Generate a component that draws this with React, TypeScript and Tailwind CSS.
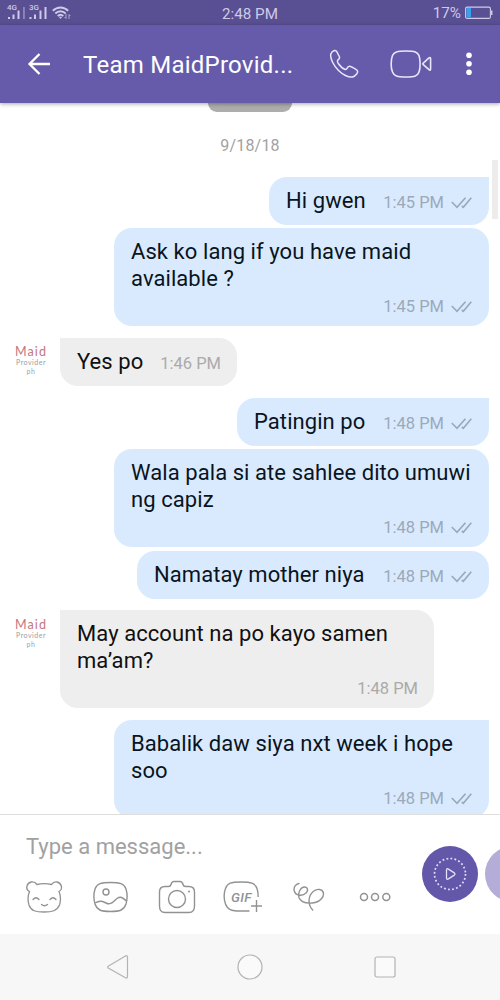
interface Message {
  text: string[];
  time: string;
  mine?: boolean;
  first?: boolean;
  box: string;
}

const messages: Message[] = [
  { text: ["Hi gwen"], time: "1:45 PM", mine: true, first: true, box: "mt-5 w-[220px] h-12" },
  { text: ["Ask ko lang if you have maid", "available ?"], time: "1:45 PM", mine: true, box: "mt-[3px] w-[375px] h-[98px]" },
  { text: ["Yes po"], time: "1:46 PM", first: true, box: "mt-3 w-[177px] h-12" },
  { text: ["Patingin po"], time: "1:48 PM", mine: true, first: true, box: "mt-3 w-[252px] h-12" },
  { text: ["Wala pala si ate sahlee dito umuwi", "ng capiz"], time: "1:48 PM", mine: true, box: "mt-[3px] w-[375px] h-[98px]" },
  { text: ["Namatay mother niya"], time: "1:48 PM", mine: true, box: "mt-1 w-[352px] h-12" },
  { text: ["May account na po kayo samen", "ma’am?"], time: "1:48 PM", first: true, box: "mt-[11px] w-[374px] h-[98px]" },
  { text: ["Babalik daw siya nxt week i hope", "soo"], time: "1:48 PM", mine: true, first: true, box: "mt-3 w-[375px] h-[98px]" },
];

function StatusBar() {
  return (
    <div className="flex h-[25px] shrink-0 items-center bg-[#594f93] text-[#cfcae8]">
      <div className="flex w-[200px] items-center pt-px pl-[7px]">
        <div className="relative h-[14px] w-[21px]">
          <span className="absolute top-[-2px] left-0 text-[8px] leading-[8px] font-medium">4G</span>
          <svg width="19" height="14" viewBox="0 0 19 14" fill="#cfcae8">
            <rect x="1" y="11" width="2" height="2" />
            <rect x="5.500" y="8.500" width="2" height="4.500" />
            <rect x="10.500" y="4.500" width="2" height="8.500" />
            <rect x="16.200" y="1" width="1.500" height="12" opacity="0.550" />
          </svg>
        </div>
        <div className="relative h-[14px] w-[24px]">
          <span className="absolute top-[-2px] left-[1px] text-[8px] leading-[8px] font-medium">3G</span>
          <svg width="19" height="14" viewBox="0 0 19 14" fill="#cfcae8">
            <rect x="1.500" y="11" width="2" height="2" />
            <rect x="6" y="8.500" width="2" height="4.500" />
            <rect x="11.500" y="4.500" width="2" height="8.500" />
            <rect x="16.500" y="1" width="2" height="12" />
          </svg>
        </div>
        <svg width="19" height="14" viewBox="0 0 19 14" fill="none" stroke="#cfcae8" strokeWidth="1.900">
          <path d="M.8 4.800C5.300.4 11.700.4 16.200 4.800M3.300 7.500C6.300 4.500 10.700 4.500 13.700 7.500M5.700 10C7.500 8.300 9.500 8.300 11.300 10" />
          <path d="M6.800 10.800L8.500 13L10.200 10.800Z" fill="#cfcae8" stroke="none" />
          <path d="M14 8v4.500M12.500 11l1.500 1.500M17 13V8.500M18.300 10L17 8.500" strokeWidth="1" opacity=".7" />
        </svg>
      </div>
      <span className="w-[100px] pt-[2px] text-center text-[15.200px] leading-[18px] whitespace-nowrap">2:48 PM</span>
      <div className="flex flex-1 items-center justify-end pt-[1px] pr-[7px]">
        <span className="mr-[4px] text-[15.200px] leading-[18px]">17%</span>
        <svg width="28" height="14" viewBox="0 0 28 14" fill="none">
          <rect x=".6" y="1.100" width="24.800" height="11.300" rx="1.500" stroke="#cfcae8" strokeWidth="1.100" />
          <rect x="1.500" y="2" width="4.500" height="9.500" fill="#39a0ed" />
          <path d="M26.700 4.500v4.500" stroke="#cfcae8" strokeWidth="1.500" />
        </svg>
      </div>
    </div>
  );
}

function Header() {
  return (
    <header className="relative z-10 flex h-[78px] shrink-0 items-center bg-[#665bab] shadow-[0_1px_4px_rgba(0,0,0,0.35)]">
      <svg className="ml-[27px]" width="24" height="24" viewBox="0 0 24 24" fill="none" stroke="#fff" strokeWidth="2.300">
        <path d="M23 12H3M12.500 2L2.500 12l10 10" />
      </svg>
      <h1 className="ml-[32px] w-[217px] pt-[2px] text-[24px] leading-8 tracking-[0.250px] whitespace-nowrap text-white">
        Team MaidProvid...
      </h1>
      <svg className="ml-[29px]" width="30" height="30" viewBox="0 0 30 30" fill="none" stroke="#e9e6fa" strokeWidth="1.500" strokeLinejoin="round">
        <path d="M2 4.500C3.500 1.500 6 .8 7.500 2.200L10.300 7.500C11 9 10.200 10.200 8.800 11.200C7.800 12 8.500 13.200 9.500 14.800C11.500 17.700 14 19.800 16.300 20.500C18.300 21.100 18 17.300 20.500 17.300C22 17.300 26.500 20.200 28 21.200C30 23.200 26.500 27.200 23.500 28C19.500 28.700 13.500 25.500 9.500 21.500C5 17 .4 9 2 4.500Z" />
      </svg>
      <svg className="ml-[31px]" width="42" height="28" viewBox="0 0 42 28" fill="none" stroke="#e9e6fa" strokeWidth="1.600" strokeLinejoin="round">
        <path d="M16 1C25 1 27.500 2 29 5.500C30.500 10 30.500 18 29 22C27.500 26 25 27 16 27C7 27 4 26 2.500 22C.7 18 .7 10 2.500 5.500C4 2 7 1 16 1Z" />
        <path d="M33 13.300L39 7.800Q40.600 6.700 40.600 9V18.500Q40.600 21 39 19.600L33 14.300Q32.500 13.800 33 13.300Z" />
      </svg>
      <svg className="ml-[34px]" width="6" height="24" viewBox="0 0 6 24" fill="#fff">
        <circle cx="3" cy="3.200" r="2.800" />
        <circle cx="3" cy="11.800" r="2.800" />
        <circle cx="3" cy="20.300" r="2.800" />
      </svg>
    </header>
  );
}

function Avatar() {
  return (
    <div className="flex w-[62px] flex-col items-center pt-[10px] font-['Lato',sans-serif]">
      <span className="text-[12.500px] leading-[12px] tracking-[1.100px] text-[#c4777d]">Maid</span>
      <span className="text-[7px] leading-[9px] tracking-[0.500px] text-[#9a9c9c]">Provider</span>
      <span className="text-[7px] leading-[8px] tracking-[0.500px] text-[#8faaa8]">ph</span>
    </div>
  );
}

function Stamp({ time, mine }: { time: string; mine?: boolean }) {
  return (
    <div className={`flex items-center text-[16.500px] leading-5 whitespace-nowrap ${mine ? "text-[#9ba9ba]" : "text-[#aaaaaa]"}`}>
      <span>{time}</span>
      {mine && (
        <svg className="ml-[7px]" width="21" height="12" viewBox="0 0 21 12" fill="none" stroke="#9ba9ba" strokeWidth="1.700">
          <path d="M.8 5L6 10.300L14.500.8M10.800 9L12.300 10.300L20.300.8" />
        </svg>
      )}
    </div>
  );
}

function Bubble({ message }: { message: Message }) {
  const { text, time, mine, first, box } = message;
  const multi = text.length > 1;
  const corner = first ? (mine ? "rounded-tr-none" : "rounded-tl-none") : "";
  return (
    <div
      className={`flex shrink-0 rounded-[18px] pl-[17px] ${corner} ${box} ${mine ? "bg-[#d9eaff] pr-[17px] text-[#0a1420]" : "bg-[#eeeeee] pr-4 text-[#101010]"} ${
        multi ? "flex-col justify-between pt-[11px] pb-[9px]" : "items-center justify-between"
      }`}
    >
      <div className="text-[22px] leading-[26.500px] tracking-[0.070px] whitespace-nowrap">
        {text.map((line) => (
          <p key={line}>{line}</p>
        ))}
      </div>
      <div className={multi ? "self-end" : "pt-[4px]"}>
        <Stamp time={time} mine={mine} />
      </div>
    </div>
  );
}

function Chat() {
  return (
    <main className="relative flex h-[711px] shrink-0 flex-col overflow-hidden bg-white">
      <div className="ml-[208px] h-[9px] w-[84px] shrink-0 rounded-b-[10px] bg-[#adadad]" />
      <p className="mt-[23px] text-center text-[16px] leading-[22px] tracking-[0.200px] text-[#a2a2a2]">9/18/18</p>
      {messages.map((m, i) => (
        <div key={i} className={m.mine ? "flex justify-end pr-[11px]" : "flex"}>
          {!m.mine && (
            <div className="w-[60px] pt-[10px]">
              <Avatar />
            </div>
          )}
          <Bubble message={m} />
        </div>
      ))}
      <div className="absolute top-[57px] right-[2px] h-[59px] w-[6px] bg-[#ececec]" />
    </main>
  );
}

function Composer() {
  return (
    <footer className="relative h-[120px] shrink-0 overflow-hidden border-t border-[#dedede] bg-white">
      <p className="pt-[18px] pl-[26px] text-[22px] leading-7 text-[#a1a1a1]">Type a message...</p>
      <div className="mt-[19px] ml-[25px] flex h-[34px] items-center text-[#929292]">
        <svg width="38" height="34" viewBox="0 0 38 34" fill="none" stroke="currentColor" strokeWidth="1.300" strokeLinecap="round">
          <path d="M12 4.500C9 .3 3 1.500 2 6C1.300 8.500 2.500 10.500 4.500 11.500C3 15 2.500 20 4 25C6 31 11 32 19 32C27 32 32 31 34.500 25C36 20 35.500 15 34 11.500C36 10.500 37 8.500 36.300 6C35 1.500 29.500.3 26.500 4.500C22 3.500 16.500 3.500 12 4.500Z" />
          <path d="M8 19.500Q11 16 14 19.500M25 19.500Q28 16 31 19.500M16.500 24.500Q19.500 27 22.500 24.500" />
        </svg>
        <svg className="ml-[30px]" width="35" height="32" viewBox="0 0 35 32" fill="none" stroke="currentColor" strokeWidth="1.400">
          <path d="M17.500 1.500C27 1.500 31 2.500 33 8C34.200 12 34.200 19 33 23C31 29 27 30.500 17.500 30.500C8 30.500 4 29 2 23C.8 19 .8 12 2 8C4 2.500 8 1.500 17.500 1.500Z" />
          <circle cx="13" cy="11" r="3" />
          <path d="M2 22C7 19 10 20.500 13 22C18 24.500 20 20.500 24 17.500C28 14.800 30 17 33.500 20" />
        </svg>
        <svg className="ml-[30px]" width="38" height="34" viewBox="0 0 38 34" fill="none" stroke="currentColor" strokeWidth="1.400">
          <path d="M7 6.500H10.500Q12.500 6.500 13 4.500Q13.700 1.500 16 1.500H22Q24.300 1.500 25 4.500Q25.500 6.500 27.500 6.500H31Q36.500 6.500 36.500 12V26Q36.500 32.500 31 32.500H7Q1.500 32.500 1.500 26V12Q1.500 6.500 7 6.500Z" />
          <circle cx="19" cy="19" r="8.500" />
          <circle cx="31" cy="11.500" r="1" fill="currentColor" stroke="none" />
        </svg>
        <div className="relative ml-[27px] h-[34px] w-[40px]">
          <svg width="40" height="34" viewBox="0 0 40 34" fill="none" stroke="currentColor" strokeWidth="1.400">
            <path d="M26.500 31H18C8 31 4.500 29.500 2.500 24C.8 19 .8 13 2.500 8.500C4.500 3 8 2 18 2C28 2 32 3 34 8.500Q35.200 12 35.200 17" />
            <path d="M33.500 20v12M28 26h11" />
          </svg>
          <span className="absolute top-[9px] left-[8px] text-[13.500px] leading-4 font-medium tracking-[0.300px] italic">GIF</span>
        </div>
        <svg className="ml-[30px]" width="32" height="30" viewBox="0 0 32 30" fill="none" stroke="currentColor" strokeWidth="1.400" strokeLinecap="round">
          <path d="M6 1.500C2.500 2 .3 5.500 1.300 9C2.500 13.800 9.500 14.500 13 11C15.800 8.200 14.500 5 11.500 5C7.500 5 4.800 11 6 15.500C7.500 20 13.500 21.500 19.500 21C27 20.500 31.500 14.500 30.300 10.500C29.200 7 24.500 6.300 20.500 9.200C15 13.500 14.500 22.500 19.700 28" />
        </svg>
        <svg className="ml-[34px]" width="32" height="10" viewBox="0 0 32 10" fill="none" stroke="currentColor" strokeWidth="1.500">
          <circle cx="5" cy="5" r="3.500" />
          <circle cx="16" cy="5" r="3.500" />
          <circle cx="27.300" cy="5" r="3.500" />
        </svg>
      </div>
      <div className="absolute top-[31px] left-[422px] flex h-14 w-14 items-center justify-center rounded-full bg-[#6257a8]">
        <svg width="34" height="34" viewBox="0 0 34 34" fill="none" stroke="#e5e0fa">
          <circle cx="17" cy="17" r="15.500" strokeWidth="1.700" strokeDasharray="1.800 2.258" />
          <path d="M13.500 13.200Q13.500 11 15.400 12.100L21.300 15.900Q22.700 17 21.300 18.100L15.400 21.900Q13.500 23 13.500 20.800Z" strokeWidth="1.300" />
        </svg>
      </div>
      <div className="absolute top-[31px] left-[485px] h-14 w-14 rounded-full bg-[#b3add7]" />
    </footer>
  );
}

function NavBar() {
  return (
    <nav className="flex h-[66px] shrink-0 items-center bg-[#f7f7f7] text-[#b3b3b3]">
      <svg className="ml-[107px]" width="22" height="26" viewBox="0 0 22 26" fill="none" stroke="currentColor" strokeWidth="1.200">
        <path d="M1.200 12.200L18 2.200Q20.500 .8 20.500 3.500V22.500Q20.500 25 18 23.500L1.200 14Q.2 13.100 1.200 12.200Z" />
      </svg>
      <svg className="ml-[108px]" width="26" height="26" viewBox="0 0 26 26" fill="#fafafa" stroke="currentColor" strokeWidth="1.200">
        <circle cx="13" cy="13" r="12" />
      </svg>
      <svg className="ml-[111px]" width="22" height="22" viewBox="0 0 22 22" fill="#fafafa" stroke="currentColor" strokeWidth="1.200">
        <rect x="1" y="1" width="20" height="20" rx="2" />
      </svg>
    </nav>
  );
}

export default function App() {
  return (
    <div className="flex h-[1000px] w-[500px] flex-col overflow-hidden bg-white font-['Roboto',sans-serif]">
      <StatusBar />
      <Header />
      <Chat />
      <Composer />
      <NavBar />
    </div>
  );
}
